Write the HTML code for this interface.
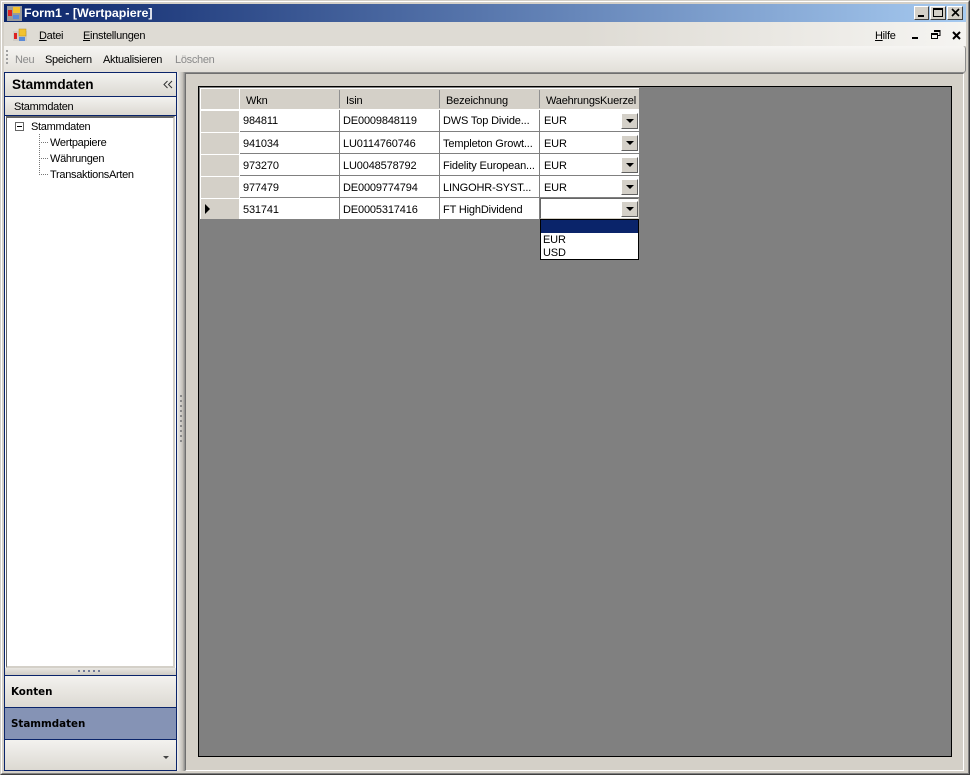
<!DOCTYPE html>
<html><head><meta charset="utf-8"><style>
html,body{margin:0;padding:0;background:#d4d0c8}
#w{position:relative;width:970px;height:775px;overflow:hidden;background:#d4d0c8;font:11px "Liberation Sans",sans-serif;letter-spacing:-.3px;color:#000}
#w div,#w span.a{position:absolute;box-sizing:border-box}
.t{white-space:nowrap;line-height:14px}
.c{letter-spacing:-.15px}
.b{font-weight:bold;letter-spacing:0}
.g{color:#8a8a8a}
.grad{background:linear-gradient(#f3f2ef,#dcd9d2)}
.rh{left:201px;width:38px;background:#d4d0c8;border-top:1px solid #fff}
.hl{background:#808080}
.btn{left:621px;width:17px;height:16px;background:#d4d0c8;border:1px solid;border-color:#fff #606060 #606060 #fff}
.btn i{position:absolute;left:4px;top:5px;width:0;height:0;border:4px solid transparent;border-top:4px solid #000;border-bottom:0}
.wb{top:6px;width:16px;height:14px;background:#d4d0c8;border:1px solid;border-color:#fff #404040 #404040 #fff}
</style></head><body><div id="w">
<!-- frame -->
<div style="left:0;top:0;width:970px;height:775px;border:1px solid;border-color:#d4d0c8 #404040 #404040 #d4d0c8"></div>
<div style="left:1px;top:1px;width:968px;height:773px;border:1px solid;border-color:#fff #808080 #808080 #fff"></div>
<!-- title -->
<div style="left:4px;top:4px;width:962px;height:18px;background:linear-gradient(90deg,#0a246a,#a6caf0)"></div>
<svg style="position:absolute;left:7px;top:6px" width="15" height="15"><rect x="0" y="0" width="15" height="15" fill="#9a9a9a"/><rect x="1" y="4" width="4" height="6" fill="#d22"/><rect x="6" y="1" width="7" height="6" fill="#f2c230"/><rect x="6" y="9" width="6" height="4" fill="#5a8ad8"/></svg>
<div class="t b" style="left:24px;top:6px;color:#fff;font-size:12.4px;">Form1 - [Wertpapiere]</div>
<div class="wb" style="left:914px;width:15px"><span class="a" style="left:3px;top:8px;width:6px;height:2px;background:#000"></span></div>
<div class="wb" style="left:930px"><span class="a" style="left:2px;top:1px;width:10px;height:9px;border:1px solid #000;border-top-width:2px"></span></div>
<div class="wb" style="left:947px"><svg style="position:absolute;left:3px;top:1px" width="10" height="10"><path d="M1 1L8 8M8 1L1 8" stroke="#000" stroke-width="1.6"/></svg></div>
<!-- menu -->
<div style="left:4px;top:22px;width:962px;height:24px;background:linear-gradient(90deg,#dedbd4,#dedbd4 60%,#f5f4f1)"></div>
<svg style="position:absolute;left:13px;top:28px" width="14" height="14"><rect x="0" y="3" width="14" height="10" fill="#d0cdc6"/><rect x="1" y="5" width="3" height="6" fill="#d22"/><rect x="6" y="1" width="7" height="7" fill="#f2c230" stroke="#b89020" stroke-width=".5"/><rect x="6" y="9" width="6" height="4" fill="#5a8ad8"/></svg>
<div class="t" style="left:39px;top:29px"><u>D</u>atei</div>
<div class="t" style="left:83px;top:29px"><u>E</u>instellungen</div>
<div class="t" style="left:875px;top:29px"><u>H</u>ilfe</div>
<div style="left:912px;top:37px;width:6px;height:2px;background:#000"></div>
<svg style="position:absolute;left:931px;top:30px" width="10" height="10"><path d="M3 .5h6v5h-2M.5 3.500h6v5h-6z M3 1.500h6M.5 4.500h6" fill="none" stroke="#000"/></svg>
<svg style="position:absolute;left:952px;top:31px" width="10" height="10"><path d="M1 1L8 8M8 1L1 8" stroke="#000" stroke-width="2"/></svg>
<!-- toolbar -->
<div style="left:4px;top:46px;width:962px;height:27px;background:linear-gradient(#f6f5f3,#e2dfd9);border-right:1px solid #8a8a8a;border-bottom:1px solid #8a8a8a;border-radius:0 3px 3px 0"></div>
<div style="left:6px;top:50px;width:2px;height:16px;background:repeating-linear-gradient(#a0a0a0 0 2px,transparent 2px 4px)"></div>
<div class="t g" style="left:15px;top:53px">Neu</div>
<div class="t" style="left:45px;top:53px">Speichern</div>
<div class="t" style="left:103px;top:53px">Aktualisieren</div>
<div class="t g" style="left:175px;top:53px">Löschen</div>
<!-- left panel -->
<div style="left:4px;top:72px;width:173px;height:699px;background:#fff;border:1px solid #0a246a"></div>
<div class="grad" style="left:5px;top:73px;width:171px;height:24px;border-bottom:1px solid #0a246a"></div>
<div class="t b" style="left:12px;top:78px;font-size:13.600px">Stammdaten</div>
<svg style="position:absolute;left:163px;top:80px" width="10" height="10"><path d="M4.500 1L1 4.500L4.500 8M9 1L5.500 4.500L9 8" fill="none" stroke="#333"/></svg>
<div class="grad" style="left:5px;top:97px;width:171px;height:19px;border-bottom:1px solid #0a246a"></div>
<div class="t" style="left:14px;top:100px">Stammdaten</div>
<div style="left:6px;top:116px;width:169px;height:552px;background:#fff;border:2px solid;border-color:#666 #d4d0c8 #d4d0c8 #666;border-left-width:1px"></div>
<div style="left:15px;top:122px;width:9px;height:9px;border:1px solid #666;background:#fff"></div>
<div style="left:17px;top:126px;width:5px;height:1px;background:#000"></div>
<div class="t" style="left:31px;top:120px">Stammdaten</div>
<div style="left:39px;top:134px;width:0;height:41px;border-left:1px dotted #777"></div>
<div style="left:39px;top:142px;width:9px;border-top:1px dotted #777"></div>
<div style="left:39px;top:158px;width:9px;border-top:1px dotted #777"></div>
<div style="left:39px;top:174px;width:9px;border-top:1px dotted #777"></div>
<div class="t" style="left:50px;top:136px">Wertpapiere</div>
<div class="t" style="left:50px;top:152px">Währungen</div>
<div class="t" style="left:50px;top:168px">TransaktionsArten</div>
<div style="left:5px;top:668px;width:171px;height:8px;background:linear-gradient(#e8e6e1,#cfccc5);border-bottom:1px solid #0a246a"></div>
<div style="left:78px;top:670px;width:24px;height:2px;background:repeating-linear-gradient(90deg,#707a98 0 2px,transparent 2px 5px)"></div>
<div class="grad" style="left:5px;top:676px;width:171px;height:32px;border-bottom:1px solid #0a246a"></div>
<div class="t b" style="left:11px;top:685px;font-size:10.300px;font-family:'DejaVu Sans',sans-serif">Konten</div>
<div style="left:5px;top:708px;width:171px;height:32px;background:#8593b5;border-bottom:1px solid #0a246a"></div>
<div class="t b" style="left:11px;top:717px;font-size:10.300px;font-family:'DejaVu Sans',sans-serif">Stammdaten</div>
<div class="grad" style="left:5px;top:740px;width:171px;height:30px"></div>
<div style="left:163px;top:756px;width:0;height:0;border:3px solid transparent;border-top:3px solid #444;border-bottom:0"></div>
<!-- splitter -->
<div style="left:177px;top:72px;width:8px;height:699px;background:linear-gradient(90deg,#f0efec,#c4c1ba 70%,#8a8a8a)"></div>
<div style="left:180px;top:395px;width:2px;height:48px;background:repeating-linear-gradient(#8a8a8a 0 2px,transparent 2px 5px)"></div>
<!-- mdi area -->
<div style="left:185px;top:73px;width:779px;height:698px;background:#d4d0c8;border:1px solid;border-color:#6f6f6f #fff #fff #6f6f6f"></div>
<div style="left:198px;top:86px;width:754px;height:671px;background:#808080;border:1px solid #000"></div>
<!-- grid -->
<div style="left:200px;top:88px;width:439px;height:131px;background:#fff"></div>
<div style="left:201px;top:89px;width:438px;height:20px;background:#d4d0c8"></div>
<div style="left:239px;top:88px;width:1px;height:131px;background:#fff"></div>
<div style="left:339px;top:90px;width:1px;height:18px;background:#909090"></div>
<div style="left:439px;top:90px;width:1px;height:18px;background:#909090"></div>
<div style="left:539px;top:90px;width:1px;height:18px;background:#909090"></div>
<div class="t c" style="left:246px;top:94px">Wkn</div>
<div class="t c" style="left:346px;top:94px">Isin</div>
<div class="t c" style="left:446px;top:94px">Bezeichnung</div>
<div class="t c" style="left:546px;top:94px;letter-spacing:-.2px">WaehrungsKuerzel</div>
<!-- row headers -->
<div class="rh" style="top:110px;height:22px"></div>
<div class="rh" style="top:132px;height:22px"></div>
<div class="rh" style="top:154px;height:22px"></div>
<div class="rh" style="top:176px;height:22px"></div>
<div class="rh" style="top:198px;height:21px"></div>
<div style="left:205px;top:204px;width:0;height:0;border:5px solid transparent;border-left:5px solid #000;border-right:0"></div>
<!-- lines -->
<div class="hl" style="left:240px;top:131px;width:399px;height:1px"></div>
<div class="hl" style="left:240px;top:153px;width:399px;height:1px"></div>
<div class="hl" style="left:240px;top:175px;width:399px;height:1px"></div>
<div class="hl" style="left:240px;top:197px;width:399px;height:1px"></div>
<div class="hl" style="left:339px;top:110px;width:1px;height:109px"></div>
<div class="hl" style="left:439px;top:110px;width:1px;height:109px"></div>
<div class="hl" style="left:539px;top:110px;width:1px;height:109px"></div>
<!-- rows -->
<div class="t c" style="left:243px;top:114px">984811</div><div class="t c" style="left:343px;top:114px">DE0009848119</div><div class="t c" style="left:443px;top:114px">DWS Top Divide...</div><div class="t c" style="left:544px;top:114px">EUR</div>
<div class="t c" style="left:243px;top:137px">941034</div><div class="t c" style="left:343px;top:137px">LU0114760746</div><div class="t c" style="left:443px;top:137px">Templeton Growt...</div><div class="t c" style="left:544px;top:137px">EUR</div>
<div class="t c" style="left:243px;top:159px">973270</div><div class="t c" style="left:343px;top:159px">LU0048578792</div><div class="t c" style="left:443px;top:159px">Fidelity European...</div><div class="t c" style="left:544px;top:159px">EUR</div>
<div class="t c" style="left:243px;top:181px">977479</div><div class="t c" style="left:343px;top:181px">DE0009774794</div><div class="t c" style="left:443px;top:181px">LINGOHR-SYST...</div><div class="t c" style="left:544px;top:181px">EUR</div>
<div class="t c" style="left:243px;top:203px">531741</div><div class="t c" style="left:343px;top:203px">DE0005317416</div><div class="t c" style="left:443px;top:203px">FT HighDividend</div>
<!-- combos -->
<div class="btn" style="top:113px"><i></i></div>
<div class="btn" style="top:135px"><i></i></div>
<div class="btn" style="top:157px"><i></i></div>
<div class="btn" style="top:179px"><i></i></div>
<div style="left:540px;top:198px;width:99px;height:21px;border:1px solid;border-color:#666 #d4d0c8 #d4d0c8 #666;background:#fff"></div>
<div class="btn" style="top:201px"><i></i></div>
<!-- dropdown -->
<div style="left:540px;top:219px;width:99px;height:41px;background:#fff;border:1px solid #000"></div>
<div style="left:541px;top:220px;width:97px;height:13px;background:#0a246a"></div>
<div class="t c" style="left:543px;top:234px;line-height:13px">EUR</div>
<div class="t c" style="left:543px;top:247px;line-height:13px">USD</div>
</div></body></html>
